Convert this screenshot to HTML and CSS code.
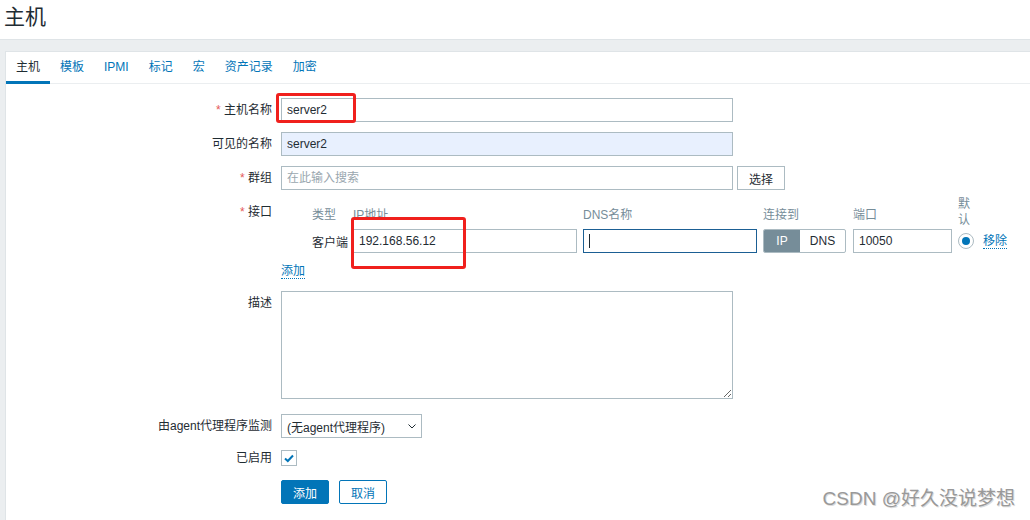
FILE: index.html
```html
<!DOCTYPE html>
<html lang="zh-CN">
<head>
    <meta charset="UTF-8">
    <meta name="viewport" content="width=device-width, initial-scale=1.0">
    <title>主机</title>
    <link rel="stylesheet" href="styles.css">
</head>
<body>
    <header class="page-header">
        <h1>主机</h1>
    </header>

    <main class="wrapper">
        <div class="container">
            <ul class="tabs">
                <li class="active">主机</li>
                <li>模板</li>
                <li>IPMI</li>
                <li>标记</li>
                <li>宏</li>
                <li>资产记录</li>
                <li>加密</li>
            </ul>

            <div class="form">
                <div class="form-row">
                    <label class="form-label"><span class="req">*</span> 主机名称</label>
                    <div class="form-field mark-wrap">
                        <input class="text-input wide" type="text" value="server2">
                        <span class="mark mark-host"></span>
                    </div>
                </div>

                <div class="form-row">
                    <label class="form-label">可见的名称</label>
                    <div class="form-field">
                        <input class="text-input wide autofill" type="text" value="server2">
                    </div>
                </div>

                <div class="form-row">
                    <label class="form-label"><span class="req">*</span> 群组</label>
                    <div class="form-field inline-group">
                        <input class="text-input wide" type="text" placeholder="在此输入搜索">
                        <button class="btn-grey">选择</button>
                    </div>
                </div>

                <div class="form-row iface-row">
                    <label class="form-label"><span class="req">*</span> 接口</label>
                    <div class="form-field">
                        <div class="iface">
                            <span></span>
                            <span class="iface-head">类型</span>
                            <span class="iface-head">IP地址</span>
                            <span class="iface-head">DNS名称</span>
                            <span class="iface-head">连接到</span>
                            <span class="iface-head">端口</span>
                            <span class="iface-head default-head">默<br>认</span>
                            <span></span>

                            <span></span>
                            <span>客户端</span>
                            <div class="mark-wrap">
                                <input class="text-input ip-input" type="text" value="192.168.56.12">
                                <span class="mark mark-ip"></span>
                            </div>
                            <div class="text-input dns-input focused"><span class="caret"></span></div>
                            <div class="toggle">
                                <span class="toggle-item on">IP</span>
                                <span class="toggle-item">DNS</span>
                            </div>
                            <input class="text-input port-input" type="text" value="10050">
                            <span class="radio"><span class="radio-dot"></span></span>
                            <a class="link" href="#">移除</a>
                        </div>
                        <a class="link add-link" href="#">添加</a>
                    </div>
                </div>

                <div class="form-row desc-row">
                    <label class="form-label">描述</label>
                    <div class="form-field">
                        <textarea class="textarea"></textarea>
                    </div>
                </div>

                <div class="form-row select-row">
                    <label class="form-label">由agent代理程序监测</label>
                    <div class="form-field">
                        <div class="select">
                            <span>(无agent代理程序)</span>
                            <svg width="8" height="5" viewBox="0 0 8 5"><path d="M0.5 0.5 L4 4 L7.5 0.5" fill="none" stroke="#1f2c33" stroke-width="1"/></svg>
                        </div>
                    </div>
                </div>

                <div class="form-row">
                    <label class="form-label">已启用</label>
                    <div class="form-field check-field">
                        <span class="checkbox">
                            <svg width="14" height="14" viewBox="0 0 14 14"><path d="M3 7.5 L5.8 10 L11 4.5" fill="none" stroke="#0275b8" stroke-width="2"/></svg>
                        </span>
                    </div>
                </div>

                <div class="form-row buttons-row">
                    <span class="form-label"></span>
                    <div class="form-field inline-group">
                        <button class="btn-primary">添加</button>
                        <button class="btn-alt">取消</button>
                    </div>
                </div>
            </div>
        </div>
    </main>

    <div class="watermark">CSDN @好久没说梦想</div>
</body>
</html>
```

FILE: styles.css
```css
body {
    margin: 0;
    height: 520px;
    overflow: hidden;
    position: relative;
    font-family: "Liberation Sans", Arial, "Noto Sans CJK SC", sans-serif;
    font-size: 12px;
    color: #1f2c33;
    background-color: #ebeef0;
}

.page-header {
    height: 40px;
    box-sizing: border-box;
    background: #fff;
    border-bottom: 1px solid #dfe4e7;
}

.page-header h1 {
    margin: 0;
    padding-left: 4px;
    font-size: 21px;
    font-weight: normal;
    line-height: 34px;
}

.wrapper {
    padding: 11px 0 0 5px;
}

.container {
    height: 469px;
    background: #fff;
    border-top: 1px solid #dfe4e7;
    border-left: 1px solid #dfe4e7;
}

/* tabs */
.tabs {
    display: flex;
    margin: 0;
    padding: 0;
    list-style: none;
    border-bottom: 1px solid #ebeef0;
}

.tabs li {
    padding: 8px 10px 7px;
    line-height: 14px;
    color: #0275b8;
    border-bottom: 3px solid transparent;
    margin-bottom: -1px;
}

.tabs li.active {
    color: #1f2c33;
    border-bottom-color: #0275b8;
}

/* form layout */
.form {
    padding-top: 14px;
}

.form-row {
    display: flex;
    align-items: flex-start;
    margin-bottom: 10px;
}

.form-label {
    flex-shrink: 0;
    width: 266px;
    margin-right: 9px;
    text-align: right;
    line-height: 24px;
}

.req {
    color: #e45959;
}

.form-field {
    position: relative;
}

.inline-group {
    display: flex;
    gap: 4px;
}

.text-input {
    display: block;
    box-sizing: border-box;
    height: 24px;
    margin: 0;
    padding: 0 5px;
    border: 1px solid #acbbc2;
    background: #fff;
    font: inherit;
    color: #1f2c33;
    outline: none;
}

.text-input::placeholder {
    color: #9aa7af;
}

.wide {
    width: 452px;
}

.autofill {
    background-color: #e8f0fe;
}

.btn-grey {
    height: 24px;
    padding: 0 11px;
    border: 1px solid #acbbc2;
    background: #fff;
    font: inherit;
    color: #1f2c33;
}

/* red annotation boxes */
.mark-wrap {
    position: relative;
}

.mark {
    position: absolute;
    box-sizing: border-box;
    border: 3px solid #f0201d;
    border-radius: 3px;
}

.mark-host {
    left: -5px;
    top: -5px;
    width: 80px;
    height: 30px;
}

.mark-ip {
    left: -2px;
    top: -12px;
    width: 115px;
    height: 52px;
}

/* interfaces */
.iface-row {
    margin-bottom: 12px;
}

.iface {
    display: grid;
    grid-template-columns: 31px 41px 230px 180px 90px 105px 25px auto;
    grid-template-rows: 26px 24px;
    row-gap: 3px;
    align-items: center;
}

.iface-head {
    color: #768d99;
}

.default-head {
    align-self: start;
    margin-top: -4px;
    line-height: 16px;
}

.ip-input {
    width: 224px;
}

.dns-input {
    width: 174px;
    display: flex;
    align-items: center;
}

.focused {
    border-color: #1b5f94;
}

.caret {
    width: 1px;
    height: 14px;
    background: #1f2c33;
}

.toggle {
    display: flex;
    width: 83px;
    height: 24px;
    box-sizing: border-box;
    border: 1px solid #acbbc2;
    border-radius: 2px;
    overflow: hidden;
}

.toggle-item {
    display: flex;
    align-items: center;
    justify-content: center;
    flex: 1;
}

.toggle-item.on {
    flex: 0 0 36px;
    background: #768d99;
    color: #fff;
}

.port-input {
    width: 99px;
}

.radio {
    display: flex;
    align-items: center;
    justify-content: center;
    width: 16px;
    height: 16px;
    box-sizing: border-box;
    border: 1px solid #acbbc2;
    border-radius: 50%;
}

.radio-dot {
    width: 8px;
    height: 8px;
    border-radius: 50%;
    background: #0275b8;
}

.link {
    color: #0275b8;
    text-decoration: none;
    border-bottom: 1px dotted #0275b8;
    justify-self: start;
    line-height: 14px;
}

.add-link {
    display: inline-block;
    margin-top: 11px;
}

/* description */
.desc-row {
    margin-bottom: 15px;
}

.textarea {
    display: block;
    box-sizing: border-box;
    width: 452px;
    height: 108px;
    margin: 0;
    border: 1px solid #acbbc2;
    font: inherit;
}

/* select & checkbox */
.select-row {
    margin-bottom: 8px;
}

.select {
    display: flex;
    align-items: center;
    justify-content: space-between;
    box-sizing: border-box;
    width: 141px;
    height: 24px;
    padding: 0 5px 0 5px;
    border: 1px solid #acbbc2;
}

.check-field {
    display: flex;
    align-items: center;
    height: 24px;
}

.checkbox {
    display: flex;
    align-items: center;
    justify-content: center;
    box-sizing: border-box;
    width: 16px;
    height: 16px;
    border: 1px solid #acbbc2;
}

/* buttons */
.buttons-row {
    margin-top: 2px;
}

.buttons-row .inline-group {
    gap: 10px;
}

.btn-primary,
.btn-alt {
    height: 24px;
    padding: 0 11px;
    font: inherit;
    border: 1px solid #0275b8;
    border-radius: 2px;
}

.btn-primary {
    background: #0275b8;
    color: #fff;
}

.btn-alt {
    background: #fff;
    color: #0275b8;
}

.watermark {
    position: absolute;
    right: 15px;
    bottom: 11px;
    font-size: 19px;
    line-height: 20px;
    color: #999;
    text-shadow: 1px 1px 0 #dcdcdc;
}
```
